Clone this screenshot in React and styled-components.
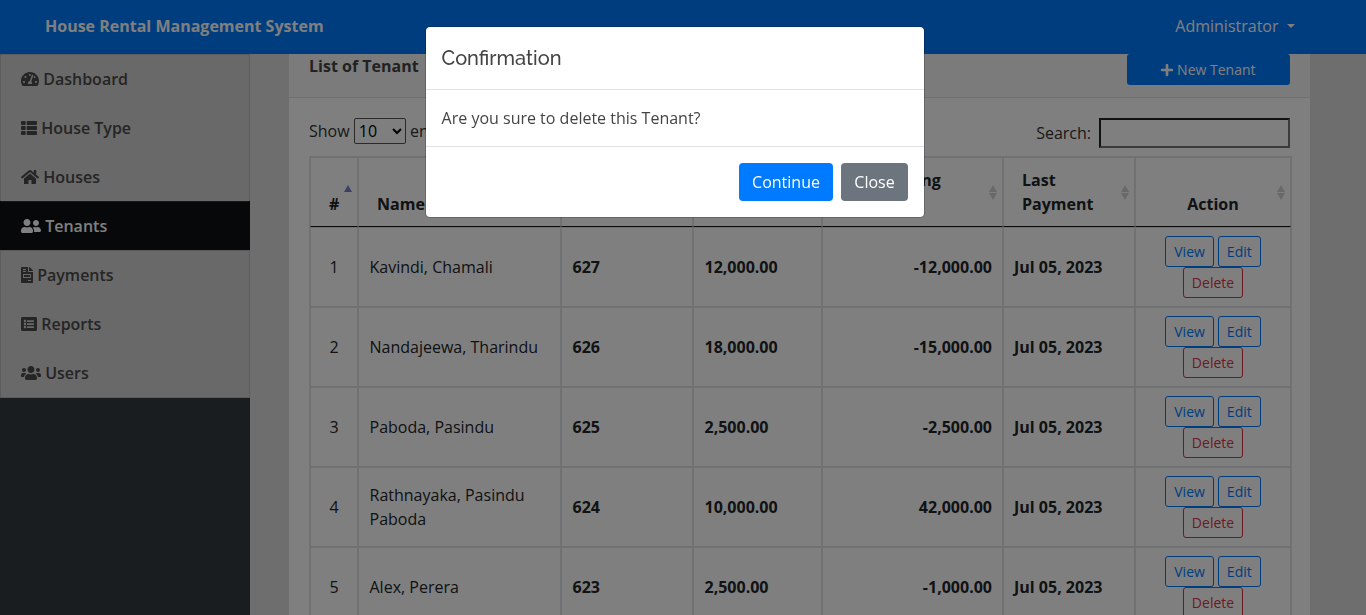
import React from "react";
import styled, { createGlobalStyle, css } from "styled-components";
import {
  FaTachometerAlt, FaThList, FaHome, FaUserFriends,
  FaFileInvoice, FaListAlt, FaUsers, FaPlus,
} from "react-icons/fa";

const GlobalStyle = createGlobalStyle`
  *, *::before, *::after { box-sizing: border-box; }
  body {
    margin: 0;
    overflow: hidden;
    background: #dcdcdc;
    color: #444;
    font: 400 16px/24px "Open Sans", "Noto Sans", sans-serif;
  }
`;

const Page = styled.div`
  display: flex;
  flex-direction: column;
  height: 615px;
  overflow: hidden;
`;

const Navbar = styled.header`
  display: flex;
  justify-content: space-between;
  align-items: center;
  flex: none;
  height: 54px;
  padding: 0 71px 2px 45px;
  background: #007bff;
  color: #fff;
`;

const UserMenu = styled.a`
  display: flex;
  align-items: center;
  gap: 8.5px;
  &::after {
    content: "";
    border: 4px solid transparent;
    border-top-color: #fff;
    border-bottom: 0;
  }
`;

const Columns = styled.div`
  display: flex;
  flex: 1;
  min-height: 0;
`;

const Sidebar = styled.nav`
  flex: none;
  width: 250px;
  background: #343a40;
`;

const NavItem = styled.a`
  display: flex;
  align-items: center;
  gap: 4.2px;
  height: 49px;
  padding: 0 20px;
  border: solid #b9b9b9;
  border-width: 0 1px;
  background: #d2d2d2;
  color: #4a4a4a;
  font-weight: 600;
  &:first-child {
    box-shadow: inset 0 1px #b9b9b9;
  }
  &:last-child {
    height: 50px;
    box-shadow: inset 0 -1px #b9b9b9;
    padding-bottom: 1px;
  }
  svg {
    flex: none;
    width: ${(p) => p.$iconWidth}px;
    height: 16px;
  }
  ${(p) => p.$active && css`
    border-color: #0f1113;
    background: #0f1113;
    box-shadow: inset 0 1px #2a2d30;
    color: #fff;
    & + a { box-shadow: inset 0 1px #b4b4b4; }
  `}
`;

const Main = styled.main`
  flex: 1;
  min-width: 0;
  padding: 0 56px 0 39px;
`;

const Card = styled.section`
  width: 1021px;
  height: 700px;
  background: #fff;
`;

const CardHeader = styled.div`
  display: flex;
  justify-content: space-between;
  height: 44px;
  padding: 0 20px;
  border-bottom: 1px solid #dfdfdf;
  background: #f7f7f7;
  color: #444;
`;

const NewButton = styled.a`
  display: flex;
  justify-content: center;
  align-items: center;
  gap: 3.6px;
  width: 163px;
  height: 31px;
  padding-right: 2px;
  border-radius: 3px;
  background: #007bff;
  color: #fff;
  font-size: 14px;
`;

const CardBody = styled.div`
  padding: 20px 18px 0 20px;
`;

const Controls = styled.div`
  display: flex;
  justify-content: space-between;
  align-items: flex-start;
  height: 38px;
  padding-right: 2px;
  color: #333;
`;

const Length = styled.label`
  display: flex;
  align-items: center;
  gap: 4.2px;
  height: 26px;
`;

const Select = styled.select`
  width: 52px;
  height: 26px;
  border: 1px solid #555;
  border-radius: 2px;
  background: transparent;
  color: #000;
  font: inherit;
`;

const Search = styled.label`
  display: flex;
  align-items: center;
  gap: 8px;
  height: 30px;
`;

const SearchInput = styled.input`
  width: 191px;
  height: 30px;
  border: 2px solid;
  border-color: #222 #767676 #767676 #222;
  background: transparent;
`;

const Table = styled.table`
  width: 983px;
  table-layout: fixed;
  border: 1px solid #dee2e6;
  border-collapse: separate;
  border-spacing: 0;
  color: #212529;
`;

const Th = styled.th`
  position: relative;
  width: ${(p) => p.$width}px;
  height: 70px;
  padding: 10px 18px;
  border: 1px solid #dee2e6;
  border-bottom-color: #111;
  text-align: ${(p) => p.$align || "left"};
  vertical-align: bottom;
`;

const SortMark = styled.svg`
  position: absolute;
  right: 5.5px;
  top: 27px;
`;

const Td = styled.td`
  height: 80px;
  padding: 8px 10px;
  padding-left: ${(p) => (p.$align ? 10 : 10.5)}px;
  border: 1px solid #dee2e6;
  text-align: ${(p) => p.$align || "left"};
  font-weight: ${(p) => (p.$bold ? 700 : 400)};
`;

const Actions = styled.div`
  display: flex;
  flex-wrap: wrap;
  justify-content: center;
  column-gap: 4px;
`;

const ActionButton = styled.button`
  height: 31px;
  padding: 0 8px;
  border: 1px solid ${(p) => (p.$danger ? "#dc3545" : "#007bff")};
  border-radius: 3px;
  background: transparent;
  color: ${(p) => (p.$danger ? "#dc3545" : "#007bff")};
  font: 14px/21px "Open Sans", sans-serif;
`;

const Backdrop = styled.div`
  position: fixed;
  inset: 0;
  display: flex;
  justify-content: center;
  align-items: flex-start;
  padding: 26px 16px 0 0;
  background: rgba(0, 0, 0, 0.5);
`;

const Dialog = styled.div`
  width: 500px;
  border: 1px solid rgba(0, 0, 0, 0.2);
  border-radius: 5px;
  background: #fff;
  background-clip: padding-box;
`;

const DialogTitle = styled.h5`
  height: 63px;
  margin: 0;
  padding: 16px 15.5px;
  border-bottom: 1px solid #dee2e6;
  font: 500 20px/30px Raleway, Lato, sans-serif;
`;

const DialogBody = styled.div`
  height: 56px;
  padding: 16px 15.6px;
`;

const DialogFooter = styled.div`
  display: flex;
  justify-content: flex-end;
  gap: 8px;
  height: 71px;
  padding: 16px;
  border-top: 1px solid #dee2e6;
`;

const DialogButton = styled.button`
  width: ${(p) => (p.$primary ? 94 : 67)}px;
  height: 38px;
  padding: 0;
  border: 0;
  border-radius: 4px;
  background: ${(p) => (p.$primary ? "#007bff" : "#6c757d")};
  color: #fff;
  font: inherit;
`;

const NAV = [
  ["Dashboard", FaTachometerAlt, 18],
  ["House Type", FaThList, 16],
  ["Houses", FaHome, 18],
  ["Tenants", FaUserFriends, 20],
  ["Payments", FaFileInvoice, 12],
  ["Reports", FaListAlt, 16],
  ["Users", FaUsers, 20],
];

const HEADERS = [
  { label: "#", width: 48, align: "center" },
  { label: "Name", width: 203 },
  { label: "House Rented", width: 132 },
  { label: "Monthly Rate", width: 129 },
  { label: "Outstanding Balance", width: 181 },
  { label: "Last Payment", width: 132 },
  { label: "Action", width: 156, align: "center" },
];

const TENANTS = [
  ["Kavindi, Chamali", "627", "12,000.00", "-12,000.00"],
  ["Nandajeewa, Tharindu", "626", "18,000.00", "-15,000.00"],
  ["Paboda, Pasindu", "625", "2,500.00", "-2,500.00"],
  ["Rathnayaka, Pasindu Paboda", "624", "10,000.00", "42,000.00"],
  ["Alex, Perera", "623", "2,500.00", "-1,000.00"],
];

function SortIcon({ ascending }) {
  return (
    <SortMark width="8" height="15" viewBox="0 0 8 15">
      <path d="M0 7 4 0 8 7Z" fill={ascending ? "#7d7dd0" : "#d3d3d3"} />
      {!ascending && <path d="M0 8H8L4 15Z" fill="#d3d3d3" />}
    </SortMark>
  );
}

export default function App() {
  return (
    <>
      <GlobalStyle />
      <Page>
        <Navbar>
          <b>House Rental Management System</b>
          <UserMenu>Administrator</UserMenu>
        </Navbar>
        <Columns>
          <Sidebar>
            {NAV.map(([label, Icon, iconWidth]) => (
              <NavItem key={label} $iconWidth={iconWidth} $active={label === "Tenants"}>
                <Icon />
                {label}
              </NavItem>
            ))}
          </Sidebar>
          <Main>
            <Card>
              <CardHeader>
                <b>List of Tenant</b>
                <NewButton><FaPlus />New Tenant</NewButton>
              </CardHeader>
              <CardBody>
                <Controls>
                  <Length>
                    Show
                    <Select defaultValue="10"><option>10</option></Select>
                    entries
                  </Length>
                  <Search>Search:<SearchInput /></Search>
                </Controls>
                <Table>
                  <thead>
                    <tr>
                      {HEADERS.map((h, i) => (
                        <Th key={h.label} $width={h.width} $align={h.align}>
                          {h.label}
                          <SortIcon ascending={i === 0} />
                        </Th>
                      ))}
                    </tr>
                  </thead>
                  <tbody>
                    {TENANTS.map(([name, house, rate, balance], i) => (
                      <tr key={name}>
                        <Td $align="center">{i + 1}</Td>
                        <Td>{name}</Td>
                        <Td $bold>{house}</Td>
                        <Td $bold>{rate}</Td>
                        <Td $bold $align="right">{balance}</Td>
                        <Td $bold $align="start">Jul 05, 2023</Td>
                        <Td $align="center">
                          <Actions>
                            <ActionButton>View</ActionButton>
                            <ActionButton>Edit</ActionButton>
                            <ActionButton $danger>Delete</ActionButton>
                          </Actions>
                        </Td>
                      </tr>
                    ))}
                  </tbody>
                </Table>
              </CardBody>
            </Card>
          </Main>
        </Columns>
      </Page>
      <Backdrop>
        <Dialog role="dialog">
          <DialogTitle>Confirmation</DialogTitle>
          <DialogBody>Are you sure to delete this Tenant?</DialogBody>
          <DialogFooter>
            <DialogButton $primary>Continue</DialogButton>
            <DialogButton>Close</DialogButton>
          </DialogFooter>
        </Dialog>
      </Backdrop>
    </>
  );
}
